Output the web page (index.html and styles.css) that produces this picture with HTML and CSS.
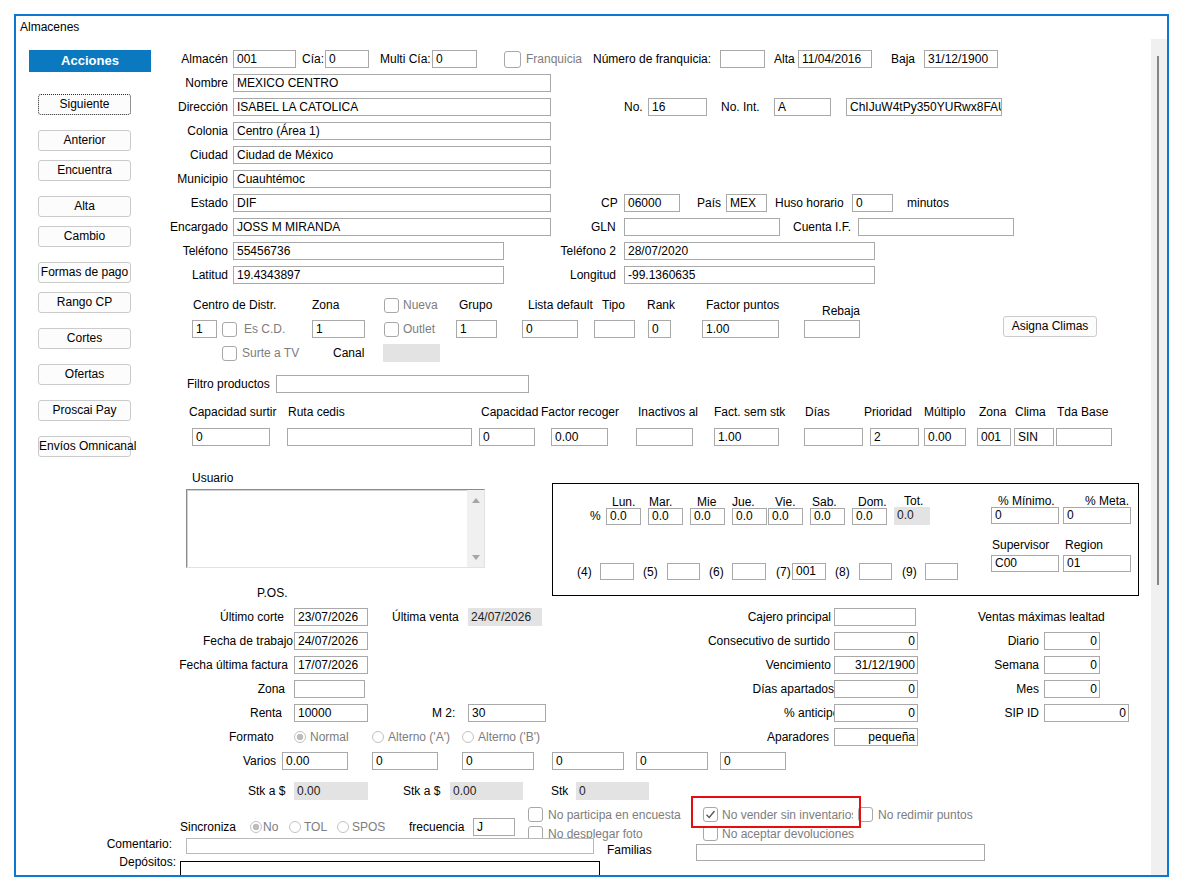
FILE: index.html
```html
<!DOCTYPE html>
<html lang="es">
<head>
<meta charset="utf-8">
<title>Almacenes</title>
<link rel="stylesheet" href="styles.css">
</head>
<body>
<div class="win">
  <div class="title">Almacenes</div>
  <div class="body">
    <div class="content">
      <div class="top">
        <div class="side">
          <div class="acc">Acciones</div>
          <div class="btn focus mt22">Siguiente</div>
          <div class="btn mt15">Anterior</div>
          <div class="btn mt9">Encuentra</div>
          <div class="btn mt15">Alta</div>
          <div class="btn mt9">Cambio</div>
          <div class="btn mt15">Formas de pago</div>
          <div class="btn mt9">Rango CP</div>
          <div class="btn mt15">Cortes</div>
          <div class="btn mt15">Ofertas</div>
          <div class="btn mt15">Proscai Pay</div>
          <div class="btn mt15">Envíos Omnicanal</div>
        </div>
        <div class="main">
          <div class="row">
            <span class="lb r w63">Almacén</span><span class="in ml5 w63">001</span><span class="lb ml6 w23">Cía:</span><span class="in w44">0</span><span class="lb ml11 w52">Multi Cía:</span><span class="in w45">0</span><span class="cb cb17 ml27"></span><span class="lb dis ml5 w67">Franquicia</span><span class="lb w127">Número de franquicia:</span><span class="in w45"></span><span class="lb ml9 w24">Alta</span><span class="in w74">11/04/2016</span><span class="lb ml19 w33">Baja</span><span class="in w74">31/12/1900</span>
          </div>
          <div class="row">
            <span class="lb r w63">Nombre</span><span class="in ml5 w318">MEXICO CENTRO</span>
          </div>
          <div class="row">
            <span class="lb r w63">Dirección</span><span class="in ml5 w318">ISABEL LA CATOLICA</span><span class="lb ml73 w24">No.</span><span class="in w59">16</span><span class="lb ml14 w53">No. Int.</span><span class="in w57">A</span><span class="in ml15 w156">ChIJuW4tPy350YURwx8FAUs</span>
          </div>
          <div class="row">
            <span class="lb r w63">Colonia</span><span class="in ml5 w318">Centro (Área 1)</span>
          </div>
          <div class="row">
            <span class="lb r w63">Ciudad</span><span class="in ml5 w318">Ciudad de México</span>
          </div>
          <div class="row">
            <span class="lb r w63">Municipio</span><span class="in ml5 w318">Cuauhtémoc</span>
          </div>
          <div class="row">
            <span class="lb r w63">Estado</span><span class="in ml5 w318">DIF</span><span class="lb ml50 w23">CP</span><span class="in w56">06000</span><span class="lb ml17 w29">País</span><span class="in w41">MEX</span><span class="lb ml8 w77">Huso horario</span><span class="in w41">0</span><span class="lb ml14">minutos</span>
          </div>
          <div class="row">
            <span class="lb r w63">Encargado</span><span class="in ml5 w318">JOSS M MIRANDA</span><span class="lb ml40 w33">GLN</span><span class="in w156"></span><span class="lb ml13 w65">Cuenta I.F.</span><span class="in w156"></span>
          </div>
          <div class="row">
            <span class="lb r w63">Teléfono</span><span class="in ml5 w271">55456736</span><span class="lb r w112">Teléfono 2</span><span class="in ml8 w251">28/07/2020</span>
          </div>
          <div class="row">
            <span class="lb r w63">Latitud</span><span class="in ml5 w271">19.4343897</span><span class="lb r w112">Longitud</span><span class="in ml8 w251">-99.1360635</span>
          </div>
          <div class="row mt6">
            <span class="lb ml28 w119">Centro de Distr.</span><span class="lb w72">Zona</span><span class="cb"></span><span class="lb dis ml4 w56">Nueva</span><span class="lb w69">Grupo</span><span class="lb w74">Lista default</span><span class="lb w45">Tipo</span><span class="lb w59">Rank</span><span class="lb w116">Factor puntos</span><span class="lb rebaja">Rebaja</span>
          </div>
          <div class="row">
            <span class="in ml27 w25">1</span><span class="cb ml5"></span><span class="lb dis ml7 w68">Es C.D.</span><span class="in w53">1</span><span class="cb ml19"></span><span class="lb dis ml4 w53">Outlet</span><span class="in w41">1</span><span class="in ml25 w56">0</span><span class="in ml16 w41"></span><span class="in ml13 w23">0</span><span class="in ml31 w77">1.00</span><span class="in ml25 w56"></span><span class="btn2 ml143 w94">Asigna Climas</span>
          </div>
          <div class="row">
            <span class="cb ml57"></span><span class="lb dis ml5 w91">Surte a TV</span><span class="lb w50">Canal</span><span class="gray w57"></span>
          </div>
          <div class="row mt7">
            <span class="lb ml22 w89">Filtro productos</span><span class="in w253"></span>
          </div>
          <div class="row mt4">
            <span class="lb ml24 w99">Capacidad surtir</span><span class="lb w193">Ruta cedis</span><span class="lb w60">Capacidad</span><span class="lb w97">Factor recoger</span><span class="lb w76">Inactivos al</span><span class="lb w91">Fact. sem stk</span><span class="lb w59">Días</span><span class="lb w60">Prioridad</span><span class="lb w55">Múltiplo</span><span class="lb w36">Zona</span><span class="lb w42">Clima</span><span class="lb">Tda Base</span>
          </div>
          <div class="row mt1">
            <span class="in ml27 w78">0</span><span class="in ml17 w185"></span><span class="in ml7 w56">0</span><span class="in ml16 w57">0.00</span><span class="in ml28 w57"></span><span class="in ml21 w65">1.00</span><span class="in ml25 w59"></span><span class="in ml7 w49">2</span><span class="in ml5 w42">0.00</span><span class="in ml11 w34">001</span><span class="in ml3 w40">SIN</span><span class="in ml2 w56"></span>
          </div>
        </div>
      </div>

      <div class="mid">
        <div class="ucol">
          <div class="ulabel">Usuario</div>
          <div class="lbox">
            <div class="lsb"><span class="up"></span><span class="dn"></span></div>
          </div>
          <div class="pos">P.OS.</div>
        </div>
        <div class="pbox">
          <div class="pleft">
            <div class="prow1">
              <span class="pct">%</span>
              <div class="dcol"><span class="dl pl6">Lun.</span><span class="in h17 w35">0.0</span></div>
              <div class="dcol ml7"><span class="dl pl1">Mar.</span><span class="in h17 w35">0.0</span></div>
              <div class="dcol ml7"><span class="dl pl7">Mie</span><span class="in h17 w35">0.0</span></div>
              <div class="dcol ml7"><span class="dl pl0">Jue.</span><span class="in h17 w35">0.0</span></div>
              <div class="dcol ml1"><span class="dl pl7">Vie.</span><span class="in h17 w35">0.0</span></div>
              <div class="dcol ml7"><span class="dl pl2">Sab.</span><span class="in h17 w35">0.0</span></div>
              <div class="dcol ml7"><span class="dl pl6">Dom.</span><span class="in h17 w35">0.0</span></div>
              <div class="dcol ml7"><span class="dl pl10">Tot.</span><span class="gray h17 w36">0.0</span></div>
            </div>
            <div class="prow2">
              <span class="lb ml24 w23">(4)</span><span class="in h17 w34"></span>
              <span class="lb ml9 w24">(5)</span><span class="in h17 w33"></span>
              <span class="lb ml9 w23">(6)</span><span class="in h17 w34"></span>
              <span class="lb ml10 w16">(7)</span><span class="in h17 w34">001</span>
              <span class="lb ml9 w24">(8)</span><span class="in h17 w33"></span>
              <span class="lb ml10 w23">(9)</span><span class="in h17 w33"></span>
            </div>
          </div>
          <div class="pright">
            <div class="prow1">
              <div class="dcol"><span class="dl pl7">% Mínimo.</span><span class="in h17 w68">0</span></div>
              <div class="dcol ml4"><span class="dl pl22">% Meta.</span><span class="in h17 w68">0</span></div>
            </div>
            <div class="prow3">
              <div class="dcol"><span class="dl2 pl1">Supervisor</span><span class="in h17 w68">C00</span></div>
              <div class="dcol ml4"><span class="dl2 pl2">Region</span><span class="in h17 w68">01</span></div>
            </div>
          </div>
        </div>
      </div>

      <div class="lrows">
        <div class="row">
          <span class="lb r w278 pr10">Último corte</span><span class="in w74">23/07/2026</span><span class="lb ml24 w76">Última venta</span><span class="gray w74">24/07/2026</span><span class="lb r w292 pr3">Cajero principal</span><span class="in w82"></span><span class="lb ml62">Ventas máximas lealtad</span>
        </div>
        <div class="row">
          <span class="lb r w278 pr1">Fecha de trabajo</span><span class="in w74">24/07/2026</span><span class="lb r ml174 w292 pr4">Consecutivo de surtido</span><span class="in num w84">0</span><span class="lb r w126 pr5">Diario</span><span class="in num w56">0</span>
        </div>
        <div class="row">
          <span class="lb r w278 pr6">Fecha última factura</span><span class="in w74">17/07/2026</span><span class="lb r ml174 w292 pr3">Vencimiento</span><span class="in num w84">31/12/1900</span><span class="lb r w126 pr5">Semana</span><span class="in num w56">0</span>
        </div>
        <div class="row">
          <span class="lb r w278 pr9">Zona</span><span class="in w71"></span><span class="lb r ml177 w292 pr0">Días apartados</span><span class="in num w84">0</span><span class="lb r w126 pr5">Mes</span><span class="in num w56">0</span>
        </div>
        <div class="row">
          <span class="lb r w278 pr12">Renta</span><span class="in w74">10000</span><span class="lb ml64 w36">M 2:</span><span class="in w78">30</span><span class="lb clip ml238 w50">% anticipo</span><span class="in num w84">0</span><span class="lb r w126 pr5">SIP ID</span><span class="in num w85">0</span>
        </div>
        <div class="row">
          <span class="lb ml213 w65">Formato</span><span class="rb on"></span><span class="lb dis ml4 w62">Normal</span><span class="rb"></span><span class="lb dis ml4 w74">Alterno ('A')</span><span class="rb"></span><span class="lb dis ml4 w64">Alterno ('B')</span><span class="lb r w292 pr5">Aparadores</span><span class="in num w84">pequeña</span>
        </div>
        <div class="row">
          <span class="lb ml227 w39">Varios</span><span class="in w66">0.00</span><span class="in ml24 w66">0</span><span class="in ml24 w72">0</span><span class="in ml18 w72">0</span><span class="in ml12 w72">0</span><span class="in ml12 w66">0</span>
        </div>
        <div class="row mt6">
          <span class="lb ml232 w46">Stk a $</span><span class="gray w74">0.00</span><span class="lb ml35 w47">Stk a $</span><span class="gray w73">0.00</span><span class="lb ml28 w25">Stk</span><span class="gray w73">0</span>
        </div>
      </div>

      <div class="bottom">
        <div class="bcol1">
          <div class="srow">
            <span class="lb ml164 w70">Sincroniza</span><span class="rb on"></span><span class="lb dis ml1 w26">No</span><span class="rb"></span><span class="lb dis ml3 w33">TOL</span><span class="rb"></span><span class="lb dis ml3 w57">SPOS</span><span class="lb w64">frecuencia</span><span class="in w42">J</span>
          </div>
          <div class="crow">
            <span class="lb r w170 pr14 clab">Comentario:</span><span class="in com w408"></span>
          </div>
          <div class="drow">
            <span class="lb r w164 pr4 dlab">Depósitos:</span><span class="dbox"></span>
          </div>
        </div>
        <div class="bcol2">
          <div class="chrow"><span class="cb"></span><span class="lb dis ml5">No participa en encuesta</span></div>
          <div class="chrow mt4"><span class="cb"></span><span class="lb dis ml5">No desplegar foto</span></div>
          <div class="famlab">Familias</div>
        </div>
        <div class="bcol3">
          <div class="chrow">
            <span class="cb ml12"><svg width="13" height="13" viewBox="0 0 13 13"><path d="M2.5 6.8 L5.2 9.5 L10.5 3" fill="none" stroke="#5a5a5a" stroke-width="1.4"/></svg></span><span class="lb dis clip ml4 w131">No vender sin inventarios</span><span class="cb ml5"></span><span class="lb dis ml5">No redimir puntos</span>
          </div>
          <div class="chrow mt4"><span class="cb ml12"></span><span class="lb dis ml4">No aceptar devoluciones</span></div>
          <div class="in famin"></div>
        </div>
        <div class="redbox"></div>
      </div>
    </div>
    <div class="vscroll"><div class="thumb"></div></div>
  </div>
</div>
</body>
</html>
```

FILE: styles.css
```css
html, body {
  margin: 0;
  padding: 0;
  background: #ffffff;
}
body {
  font-family: "Liberation Sans", Arial, sans-serif;
  font-size: 12px;
  color: #000;
}
.win {
  margin: 14px 0 0 14px;
  width: 1155px;
  height: 863px;
  border: 2px solid #0b78d3;
  box-sizing: border-box;
  display: flex;
  flex-direction: column;
  overflow: hidden;
}
.title {
  flex: none;
  height: 23px;
  line-height: 23px;
  padding-left: 4px;
}
.body {
  flex: 1;
  min-height: 0;
  display: flex;
  overflow: hidden;
}
.content {
  flex: 1;
  min-width: 0;
}
.vscroll {
  flex: none;
  width: 16px;
  background: #f0f0f0;
}
.thumb {
  margin: 17px 0 0 6px;
  width: 2px;
  height: 529px;
  background: #868686;
}

/* layout */
.top { display: flex; }
.side { flex: none; width: 149px; }
.main { flex: 1; padding-top: 8px; }
.row {
  display: flex;
  align-items: center;
  height: 24px;
  white-space: nowrap;
}
.acc {
  margin: 11px 0 0 13px;
  width: 122px;
  height: 22px;
  line-height: 22px;
  background: #0a79c0;
  color: #fff;
  font-weight: bold;
  font-size: 13px;
  text-align: center;
}
.btn, .btn2 {
  margin-left: 22px;
  width: 93px;
  height: 21px;
  line-height: 19px;
  box-sizing: border-box;
  border: 1px solid #cbcbcb;
  border-radius: 3px;
  background: #fcfcfc;
  text-align: center;
  white-space: nowrap;
}
.btn2 {
  flex: none;
  align-self: flex-start;
  margin-top: -1px;
}
.focus { border: 1px dotted #2a2a2a; }

/* controls */
.lb {
  display: block;
  flex: none;
  box-sizing: border-box;
  line-height: 14px;
  white-space: nowrap;
}
.r { text-align: right; }
.dis { color: #7d7d7d; }
.clip { overflow: hidden; }
.in {
  display: block;
  flex: none;
  height: 18px;
  line-height: 16px;
  border: 1px solid #a9a9a9;
  box-sizing: border-box;
  padding: 0 3px;
  background: #fff;
  overflow: hidden;
  white-space: nowrap;
}
.num { text-align: right; padding-right: 2px; }
.h17 { height: 17px; line-height: 15px; }
.gray {
  display: block;
  flex: none;
  height: 18px;
  line-height: 18px;
  padding-left: 3px;
  box-sizing: border-box;
  background: #e3e3e3;
  color: #222;
  white-space: nowrap;
}
.gray.h17 { line-height: 17px; }
.cb {
  display: block;
  flex: none;
  width: 15px;
  height: 15px;
  border: 1px solid #a8a8a8;
  border-radius: 3px;
  box-sizing: border-box;
  background: #fff;
}
.cb svg { display: block; }
.cb17 { width: 17px; height: 17px; }
.rb {
  display: block;
  flex: none;
  width: 12px;
  height: 12px;
  border: 1px solid #c2c2c2;
  border-radius: 50%;
  box-sizing: border-box;
  background: #fff;
}
.rb.on { background: radial-gradient(circle, #bdbdbd 0 3px, #ffffff 3.6px); }
.rebaja { padding-top: 12px; }

/* middle block */
.mid { display: flex; align-items: flex-start; }
.ucol { flex: none; margin-left: 170px; width: 299px; }
.ulabel { margin-top: 14px; line-height: 14px; padding-left: 6px; }
.lbox {
  margin-top: 4px;
  height: 79px;
  box-sizing: border-box;
  border: 1px solid;
  border-color: #8c8c8c #e2e2e2 #e2e2e2 #8c8c8c;
  box-shadow: inset 1px 1px 0 #d0d0d0;
  display: flex;
  justify-content: flex-end;
}
.lsb {
  width: 17px;
  background: #f0f0f0;
  display: flex;
  flex-direction: column;
  justify-content: space-between;
  align-items: center;
  padding: 8px 0 7px;
  box-sizing: border-box;
}
.up, .dn {
  width: 0;
  height: 0;
  border-left: 4px solid transparent;
  border-right: 4px solid transparent;
}
.up { border-bottom: 5px solid #a6a6a6; }
.dn { border-top: 5px solid #a6a6a6; }
.pos { margin-top: 18px; line-height: 14px; padding-left: 71px; }

.pbox {
  flex: none;
  margin: 26px 0 0 67px;
  width: 587px;
  height: 113px;
  border: 1px solid #000;
  box-sizing: border-box;
  display: flex;
}
.pleft { flex: none; width: 438px; }
.pright { flex: none; }
.prow1 {
  display: flex;
  align-items: flex-end;
  margin-top: 11px;
  white-space: nowrap;
}
.prow2 {
  display: flex;
  align-items: center;
  height: 17px;
  margin-top: 38px;
  white-space: nowrap;
}
.prow3 {
  display: flex;
  margin-top: 15px;
  white-space: nowrap;
}
.pct {
  display: block;
  flex: none;
  margin-left: 37px;
  width: 16px;
  height: 17px;
  line-height: 17px;
}
.dcol { display: flex; flex-direction: column; flex: none; }
.dl { display: block; height: 12px; line-height: 12px; white-space: nowrap; }
.dl2 { display: block; height: 12px; line-height: 12px; margin-bottom: 4px; white-space: nowrap; }

.lrows { margin-top: 5px; }

/* bottom block */
.bottom {
  position: relative;
  display: flex;
  align-items: flex-start;
}
.bcol1 { flex: none; width: 512px; }
.bcol2 { flex: none; width: 163px; padding-top: 4px; }
.bcol3 { flex: 1; padding-top: 4px; }
.srow {
  display: flex;
  align-items: center;
  height: 18px;
  margin-top: 15px;
  white-space: nowrap;
}
.srow .in { height: 18px; }
.crow { display: flex; align-items: flex-start; margin-top: 2px; }
.clab { margin-top: -1px; }
.com {
  position: relative;
  z-index: 1;
  height: 16px;
  border-color: #b9b9b9;
}
.drow { display: flex; align-items: flex-start; margin-top: 7px; }
.dlab { margin-top: -6px; }
.dbox {
  display: block;
  flex: none;
  width: 420px;
  height: 20px;
  border: 1px solid #000;
  box-sizing: border-box;
}
.chrow {
  display: flex;
  align-items: center;
  height: 15px;
  white-space: nowrap;
}
.famlab { margin: 3px 0 0 79px; line-height: 12px; }
.famin { margin: 3px 0 0 5px; width: 289px; height: 17px; }
.redbox {
  position: absolute;
  left: 675px;
  top: -7px;
  width: 170px;
  height: 32px;
  border: 2px solid #e50d0d;
  box-sizing: border-box;
}

/* spacing utilities */
.mt1 { margin-top: 1px; } .mt4 { margin-top: 4px; } .mt6 { margin-top: 6px; }
.mt7 { margin-top: 7px; } .mt9 { margin-top: 9px; } .mt15 { margin-top: 15px; }
.mt22 { margin-top: 22px; }

.ml1 { margin-left: 1px; } .ml2 { margin-left: 2px; } .ml3 { margin-left: 3px; }
.ml4 { margin-left: 4px; } .ml5 { margin-left: 5px; } .ml6 { margin-left: 6px; }
.ml7 { margin-left: 7px; } .ml8 { margin-left: 8px; } .ml9 { margin-left: 9px; }
.ml10 { margin-left: 10px; } .ml11 { margin-left: 11px; } .ml12 { margin-left: 12px; }
.ml13 { margin-left: 13px; } .ml14 { margin-left: 14px; } .ml15 { margin-left: 15px; }
.ml16 { margin-left: 16px; } .ml17 { margin-left: 17px; } .ml18 { margin-left: 18px; }
.ml19 { margin-left: 19px; } .ml21 { margin-left: 21px; } .ml22 { margin-left: 22px; }
.ml24 { margin-left: 24px; } .ml25 { margin-left: 25px; } .ml27 { margin-left: 27px; }
.ml28 { margin-left: 28px; } .ml31 { margin-left: 31px; } .ml35 { margin-left: 35px; }
.ml40 { margin-left: 40px; } .ml50 { margin-left: 50px; } .ml57 { margin-left: 57px; }
.ml62 { margin-left: 62px; } .ml64 { margin-left: 64px; } .ml73 { margin-left: 73px; }
.ml143 { margin-left: 143px; } .ml164 { margin-left: 164px; } .ml174 { margin-left: 174px; }
.ml177 { margin-left: 177px; } .ml213 { margin-left: 213px; } .ml227 { margin-left: 227px; }
.ml232 { margin-left: 232px; } .ml238 { margin-left: 238px; }

.pr0 { padding-right: 0; } .pr1 { padding-right: 1px; } .pr3 { padding-right: 3px; }
.pr4 { padding-right: 4px; } .pr5 { padding-right: 5px; } .pr6 { padding-right: 6px; }
.pr9 { padding-right: 9px; } .pr10 { padding-right: 10px; } .pr12 { padding-right: 12px; }
.pr14 { padding-right: 14px; }

.pl0 { padding-left: 0; } .pl1 { padding-left: 1px; } .pl2 { padding-left: 2px; }
.pl6 { padding-left: 6px; } .pl7 { padding-left: 7px; } .pl10 { padding-left: 10px; }
.pl22 { padding-left: 22px; }

.w16 { width: 16px; } .w23 { width: 23px; } .w24 { width: 24px; } .w25 { width: 25px; }
.w26 { width: 26px; } .w29 { width: 29px; } .w33 { width: 33px; } .w34 { width: 34px; }
.w35 { width: 35px; } .w36 { width: 36px; } .w39 { width: 39px; } .w40 { width: 40px; }
.w41 { width: 41px; } .w42 { width: 42px; } .w44 { width: 44px; } .w45 { width: 45px; }
.w46 { width: 46px; } .w47 { width: 47px; } .w49 { width: 49px; } .w50 { width: 50px; }
.w52 { width: 52px; } .w53 { width: 53px; } .w55 { width: 55px; } .w56 { width: 56px; }
.w57 { width: 57px; } .w59 { width: 59px; } .w60 { width: 60px; } .w62 { width: 62px; }
.w63 { width: 63px; } .w64 { width: 64px; } .w65 { width: 65px; } .w66 { width: 66px; }
.w67 { width: 67px; } .w68 { width: 68px; } .w69 { width: 69px; } .w70 { width: 70px; }
.w71 { width: 71px; } .w72 { width: 72px; } .w73 { width: 73px; } .w74 { width: 74px; }
.w76 { width: 76px; } .w77 { width: 77px; } .w78 { width: 78px; } .w82 { width: 82px; }
.w84 { width: 84px; } .w85 { width: 85px; } .w89 { width: 89px; } .w91 { width: 91px; }
.w94 { width: 94px; } .w97 { width: 97px; } .w99 { width: 99px; } .w112 { width: 112px; }
.w116 { width: 116px; } .w119 { width: 119px; } .w126 { width: 126px; } .w127 { width: 127px; }
.w131 { width: 131px; } .w156 { width: 156px; } .w164 { width: 164px; } .w170 { width: 170px; }
.w185 { width: 185px; } .w193 { width: 193px; } .w253 { width: 253px; } .w271 { width: 271px; }
.w251 { width: 251px; } .w278 { width: 278px; } .w292 { width: 292px; } .w318 { width: 318px; }
.w408 { width: 408px; }
```
